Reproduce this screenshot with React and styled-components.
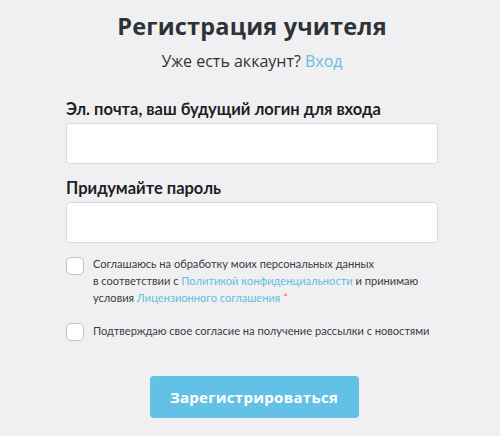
import React from "react";
import styled, { createGlobalStyle } from "styled-components";

const Global = createGlobalStyle`
  html, body { margin: 0; padding: 0; background: #f0f0f2; }
  body { font-family: "Open Sans", sans-serif; }
  * { box-sizing: border-box; }
`;

const Page = styled.div`
  width: 500px;
  height: 436px;
  padding: 10px 0 0 66px;
  background: #f0f0f2;
`;

const Form = styled.form`
  width: 372px;
  display: flex;
  flex-direction: column;
`;

const Title = styled.h1`
  margin: 0;
  text-align: center;
  font-family: "Open Sans", sans-serif;
  font-weight: 700;
  font-size: 23.5px;
  line-height: 32px;
  color: #2f3236;
  letter-spacing: 0.2px;
`;

const Sub = styled.p`
  margin: 8px 0 0;
  text-align: center;
  font-family: "Open Sans", sans-serif;
  font-size: 16px;
  line-height: 22px;
  color: #333;
`;

const Link = styled.a`
  color: #62bfe0;
  text-decoration: none;
`;

const Field = styled.div`
  display: flex;
  flex-direction: column;
  margin-top: ${(p) => p.$mt}px;
`;

const Label = styled.label`
  font-family: "Lato", sans-serif;
  font-weight: 700;
  font-size: 16.5px;
  line-height: 22px;
  color: #1d1f22;
  margin-bottom: 3px;
`;

const Input = styled.input`
  height: 41px;
  width: 100%;
  background: #fff;
  border: 1px solid #d9dadd;
  border-radius: 4px;
  outline: none;
`;

const CheckRow = styled.label`
  display: flex;
  align-items: flex-start;
  gap: 9px;
  margin-top: ${(p) => p.$mt}px;
`;

const Box = styled.span`
  flex: none;
  width: 18px;
  height: 18px;
  border: 1px solid #bfc1c5;
  border-radius: 5px;
  background: #fff;
  margin-top: ${(p) => p.$mt}px;
`;

const CheckText = styled.span`
  font-family: "Lato", sans-serif;
  font-size: 11.1px;
  line-height: 16.8px;
  color: #3a3c40;
  white-space: nowrap;
`;

const Star = styled.span`
  color: #ef6f6f;
`;

const Button = styled.button`
  align-self: center;
  margin-top: 35px;
  margin-left: 4px;
  width: 209px;
  height: 42px;
  border: none;
  border-radius: 4px;
  background: #63c1e6;
  color: #fff;
  font-family: "Open Sans", sans-serif;
  font-weight: 700;
  font-size: 15px;
  letter-spacing: 0.3px;
`;

export default function App() {
  return (
    <>
      <Global />
      <Page>
        <Form onSubmit={(e) => e.preventDefault()}>
          <Title>Регистрация учителя</Title>
          <Sub>
            Уже есть аккаунт? <Link href="#">Вход</Link>
          </Sub>
          <Field $mt={26}>
            <Label>Эл. почта, ваш будущий логин для входа</Label>
            <Input type="email" />
          </Field>
          <Field $mt={13}>
            <Label>Придумайте пароль</Label>
            <Input type="password" />
          </Field>
          <CheckRow $mt={13}>
            <Box $mt={1} />
            <CheckText>
              Соглашаюсь на обработку моих персональных данных
              <br />в соответствии с <Link href="#">Политикой конфиденциальности</Link> и принимаю
              <br />условия <Link href="#">Лицензионного соглашения</Link> <Star>*</Star>
            </CheckText>
          </CheckRow>
          <CheckRow $mt={17}>
            <Box $mt={0} />
            <CheckText>Подтверждаю свое согласие на получение рассылки с новостями</CheckText>
          </CheckRow>
          <Button type="submit">Зарегистрироваться</Button>
        </Form>
      </Page>
    </>
  );
}
